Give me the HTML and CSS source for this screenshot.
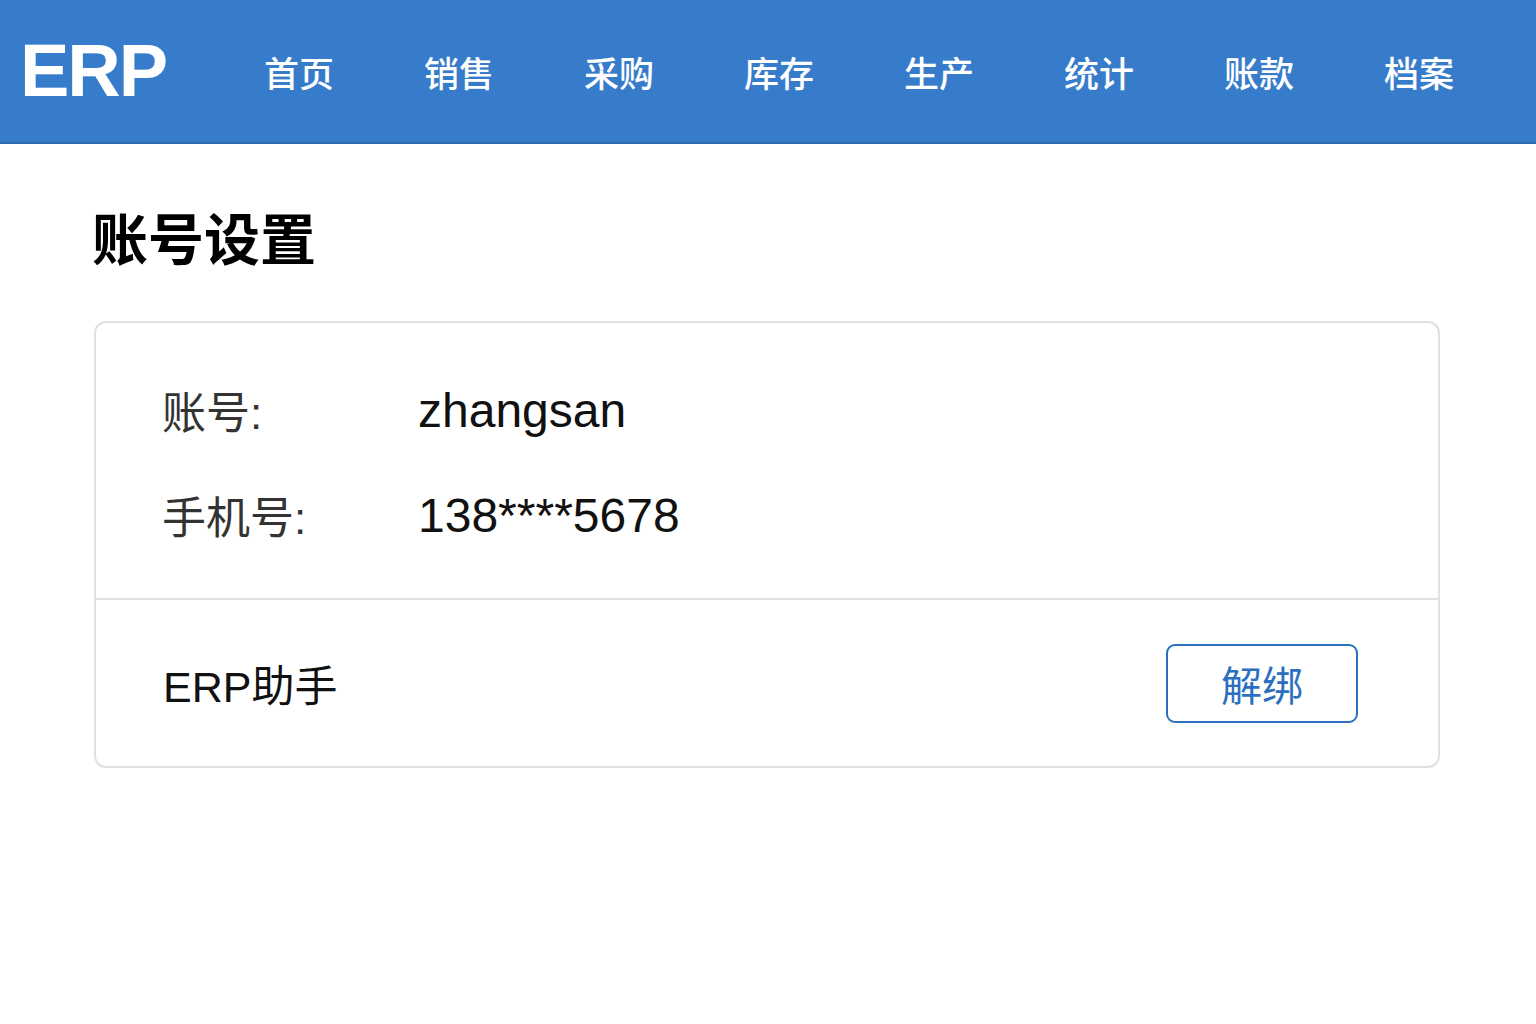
FILE: index.html
```html
<!DOCTYPE html>
<html lang="zh-CN">
<head>
    <meta charset="UTF-8">
    <meta name="viewport" content="width=device-width, initial-scale=1.0">
    <title>账号设置 - ERP</title>
    <link rel="stylesheet" href="styles.css">
</head>
<body>
    <div class="header">
        <div class="logo">ERP</div>
        <div class="nav">
            <a href="#home" class="nav-item">首页</a>
            <a href="#sales" class="nav-item">销售</a>
            <a href="#purchase" class="nav-item">采购</a>
            <a href="#stock" class="nav-item">库存</a>
            <a href="#production" class="nav-item">生产</a>
            <a href="#stats" class="nav-item">统计</a>
            <a href="#accounts" class="nav-item">账款</a>
            <a href="#archive" class="nav-item">档案</a>
        </div>
    </div>

    <div class="main">
        <h1>账号设置</h1>
        <div class="card">
            <div class="card-info">
                <div class="info-row">
                    <span class="info-label">账号:</span>
                    <span class="info-value">zhangsan</span>
                </div>
                <div class="info-row">
                    <span class="info-label">手机号:</span>
                    <span class="info-value">138****5678</span>
                </div>
            </div>
            <div class="card-bind">
                <span class="bind-name">ERP助手</span>
                <button class="unbind-btn">解绑</button>
            </div>
        </div>
    </div>
</body>
</html>
```

FILE: styles.css
```css
body {
    margin: 0;
    font-family: "Liberation Sans", "Noto Sans CJK SC", sans-serif;
    background-color: #fff;
    color: #111;
}
.header {
    height: 142px;
    background-color: #377ccb;
    border-bottom: 2px solid #2b68ad;
    display: flex;
    align-items: center;
}
.logo {
    margin-left: 20px;
    width: 178px;
    font-size: 74px;
    font-weight: bold;
    letter-spacing: -2px;
    color: #fff;
    line-height: 1;
    flex: none;
}
.nav {
    display: flex;
    gap: 90px;
    margin-left: 66px;
}
.nav-item {
    flex: none;
    font-family: "Noto Sans CJK SC", sans-serif;
    font-size: 35px;
    font-weight: 500;
    color: #fff;
    text-decoration: none;
    line-height: 1;
}
.main {
    padding: 0 94px;
}
.main h1 {
    margin: 0 0 0 -2px;
    padding-top: 59px;
    padding-bottom: 52px;
    font-family: "Noto Sans CJK SC", sans-serif;
    font-size: 56px;
    font-weight: bold;
    line-height: 66px;
    color: #000;
}
.card {
    width: 1342px;
    border: 2px solid #e0e0e0;
    border-radius: 12px;
}
.card-info {
    padding: 57px 0 53px 66px;
    display: flex;
    flex-direction: column;
    gap: 45px;
    border-bottom: 2px solid #e0e0e0;
}
.info-row {
    display: flex;
    align-items: center;
    height: 60px;
}
.info-label {
    width: 256px;
    font-size: 44px;
    color: #333;
}
.info-value {
    font-size: 48px;
    color: #111;
}
.card-bind {
    height: 166px;
    padding: 0 80px 0 67px;
    display: flex;
    align-items: center;
    justify-content: space-between;
}
.bind-name {
    font-size: 43px;
    color: #111;
}
.unbind-btn {
    width: 192px;
    height: 79px;
    background-color: #fff;
    border: 2px solid #2a6fc0;
    border-radius: 9px;
    font-family: "Noto Sans CJK SC", sans-serif;
    font-size: 41px;
    color: #2a6fc0;
    padding: 0;
}
```
